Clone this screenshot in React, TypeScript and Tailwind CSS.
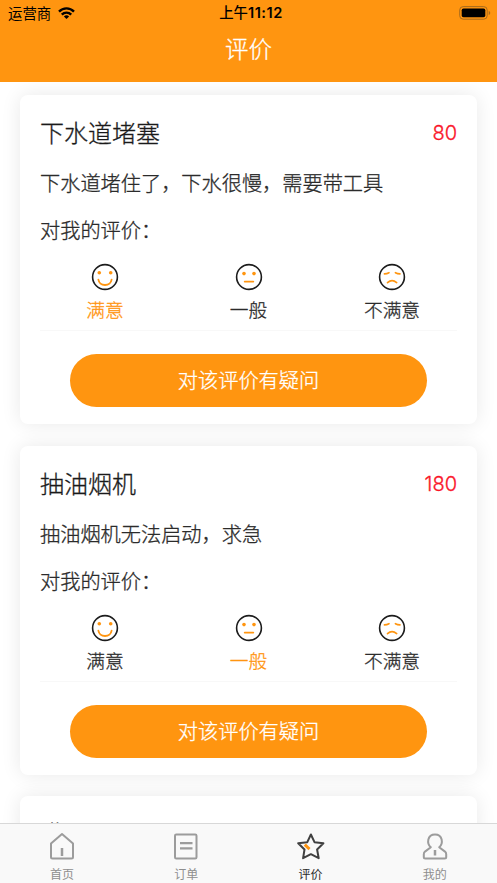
import clsx from "clsx";
import { FC, ReactNode } from "react";

type Mood = "good" | "normal" | "bad";

interface Review {
  title: string;
  price: string;
  content: string;
  mood: Mood;
}

const reviews: Review[] = [
  {
    title: "下水道堵塞",
    price: "80",
    content: "下水道堵住了，下水很慢，需要带工具",
    mood: "good",
  },
  {
    title: "抽油烟机",
    price: "180",
    content: "抽油烟机无法启动，求急",
    mood: "normal",
  },
];

const moods: { key: Mood; label: string; face: ReactNode }[] = [
  {
    key: "good",
    label: "满意",
    face: (
      <>
        <circle cx="8.3" cy="9.8" r="1.8" fill="#ff9510" stroke="none" />
        <circle cx="19.7" cy="9.8" r="1.8" fill="#ff9510" stroke="none" />
        <path d="M7.4 16.6c1.3 7.2 11.9 7.2 13.2 0" />
      </>
    ),
  },
  {
    key: "normal",
    label: "一般",
    face: (
      <>
        <circle cx="9" cy="10.6" r="1.8" fill="#ff9510" stroke="none" />
        <circle cx="19" cy="10.6" r="1.8" fill="#ff9510" stroke="none" />
        <path d="M9.7 18.6h8.6" />
      </>
    ),
  },
  {
    key: "bad",
    label: "不满意",
    face: (
      <>
        <path d="M6.4 10.9q2.5-.1 4.6-1.2M17.4 9.7q2.1 1.1 4.6 1.2" strokeWidth="1.6" />
        <path d="M9.5 19.6q4.5-4 9.2 0" strokeWidth="1.6" />
      </>
    ),
  },
];

const StatusBar: FC = () => (
  <div className="flex h-[25px] items-center justify-between pl-2 pr-[6px] text-black">
    <div className="flex w-[150px] items-center gap-[7px]">
      <span className="text-[14.4px] leading-[25px]">运营商</span>
      <svg width="17" height="12" viewBox="0 0 17 12" fill="none" stroke="black" strokeWidth="2.4">
        <path d="M1 4.6c4.2-4.3 10.8-4.3 15 0" />
        <path d="M3.8 7.6c2.6-2.7 6.8-2.7 9.4 0" />
        <path d="M8.5 12l-2.6-2.6c1.5-1.4 3.7-1.4 5.2 0z" fill="black" stroke="none" />
      </svg>
    </div>
    <div className="flex items-baseline pl-[3px] text-[14.4px] leading-[25px]">
      <span className="font-medium">上午</span>
      <span className="font-['Inter',sans-serif] text-[14.6px] font-semibold tracking-[0.5px]">
        11:12
      </span>
    </div>
    <div className="flex w-[150px] justify-end">
      <svg width="32" height="14" viewBox="0 0 32 14">
        <rect x=".7" y=".6" width="27.5" height="12.6" rx="3.5" fill="none" stroke="#a76a1c" />
        <rect x="2.7" y="2.5" width="23.6" height="8.8" rx="1.8" fill="black" />
        <path d="M29.7 4.7v4.4q1.6-.7 1.6-2.2t-1.6-2.2z" fill="#a76a1c" />
      </svg>
    </div>
  </div>
);

const ReviewCard: FC<Review> = ({ title, price, content, mood }) => (
  <section className="h-[329px] shrink-0 rounded-[8px] bg-white px-5 pt-[18px] shadow-[0_0_20px_rgba(0,0,0,0.09)]">
    <div className="flex h-10 items-start justify-between">
      <h2 className="text-2xl leading-[38px] text-[#1a1a1a]">{title}</h2>
      <span className="font-['Inter',sans-serif] text-[20px] leading-10 text-[#fa1428]">
        {price}
      </span>
    </div>
    <p className="mt-[10px] h-10 text-[20.2px] leading-10 text-[#2b2b2b]">{content}</p>
    <p className="mt-[7px] h-10 text-[20.2px] leading-10 text-[#2b2b2b]">对我的评价：</p>
    <div className="flex h-[81px] justify-between border-b border-[#f8f8f8] px-[45px] pt-[13px]">
      {moods.map(({ key, label, face }) => (
        <div key={key} className="flex w-[40px] flex-col items-center">
          <svg
            className="h-7 w-7 shrink-0"
            viewBox="0 0 28 28"
            fill="none"
            stroke="#ff9510"
            strokeWidth="1.8"
            strokeLinecap="round"
          >
            <circle cx="14" cy="14" r="12.4" stroke="#1c1c1c" strokeWidth="1.6" />
            {face}
          </svg>
          <span
            className={clsx(
              "mt-[5px] whitespace-nowrap text-[18.7px] leading-[26px]",
              key === mood ? "text-[#ff9510]" : "text-[#2b2b2b]"
            )}
          >
            {label}
          </span>
        </div>
      ))}
    </div>
    <button className="mx-auto mt-[23px] block h-[53px] w-[357px] rounded-full bg-[#ff9510] text-[20.2px] text-white">
      对该评价有疑问
    </button>
  </section>
);

const tabs: { label: string; active?: boolean; icon: ReactNode }[] = [
  {
    label: "首页",
    icon: (
      <>
        <path d="M3 11.5L14 2l11 9.5V25q0 1.5-1.5 1.5h-19Q3 26.5 3 25z" />
        <path d="M14 16v8" strokeWidth="2.5" />
      </>
    ),
  },
  {
    label: "订单",
    icon: (
      <>
        <rect x="3" y="2.5" width="21.5" height="24" rx="1.3" />
        <path d="M8 11.2h12.5M8 16.4h12.5" strokeWidth="2.2" />
      </>
    ),
  },
  {
    label: "评价",
    active: true,
    icon: (
      <>
        <path d="M13.9 2.5l3.6 7.7 8.9 1.1-6.3 6.2 1.6 8.7-7.8-4-7.8 4 1.4-8.7-6.3-6.2 9.1-1.1z" />
        <path d="M7.8 12.6l4.7 4.5" stroke="#ff9510" strokeWidth="2.9" />
      </>
    ),
  },
  {
    label: "我的",
    icon: (
      <>
        <path d="M9.8 15.2C5.500 11.500 6.200 2.400 14 2.400s8.500 9.100 4.200 12.800L24 19.600q1.200 1 1.200 2.600V25q0 1.500-1.500 1.500H4.300Q2.800 26.500 2.800 25v-2.800q0-1.600 1.200-2.600z" />
        <path d="M14 18v5.5" strokeWidth="2.5" />
      </>
    ),
  },
];

const TabBar: FC = () => (
  <nav className="grid h-[60px] shrink-0 grid-cols-4 border-t border-[#d8d8d8] bg-[#f9f9f9] font-normal">
    {tabs.map(({ label, active, icon }) => (
      <div
        key={label}
        className={clsx(
          "flex flex-col items-center pt-2",
          active ? "text-[#404040]" : "text-[#9c9c9c]"
        )}
      >
        <svg
          width="28"
          height="28"
          viewBox="0 0 28 28"
          fill="none"
          stroke="currentColor"
          strokeWidth="2"
          strokeLinejoin="round"
        >
          {icon}
        </svg>
        <span
          className={clsx(
            "mt-[5px] text-[12px] leading-[18px]",
            active ? "text-[#2b2b2b]" : "text-[#8e8e8e]"
          )}
        >
          {label}
        </span>
      </div>
    ))}
  </nav>
);

export default function App() {
  return (
    <div className="flex h-[883px] w-[497px] flex-col overflow-hidden bg-white font-['Noto_Sans_CJK_SC',sans-serif] font-light">
      <header className="h-[82px] shrink-0 bg-[#ff9510] font-normal">
        <StatusBar />
        <h1 className="text-center text-[23.5px] font-light leading-[47px] text-white [-webkit-text-stroke:0.3px]">
          评价
        </h1>
      </header>
      <main className="flex min-h-0 flex-1 flex-col gap-[21.7px] overflow-hidden px-5 pt-[13px] [-webkit-text-stroke:0.3px]">
        {reviews.map((review) => (
          <ReviewCard key={review.title} {...review} />
        ))}
        <section className="h-[329px] shrink-0 rounded-[8px] bg-white px-5 pt-[18px] shadow-[0_0_20px_rgba(0,0,0,0.09)]">
          <h2 className="text-2xl leading-[38px] text-[#1a1a1a]">满园</h2>
        </section>
      </main>
      <TabBar />
    </div>
  );
}
